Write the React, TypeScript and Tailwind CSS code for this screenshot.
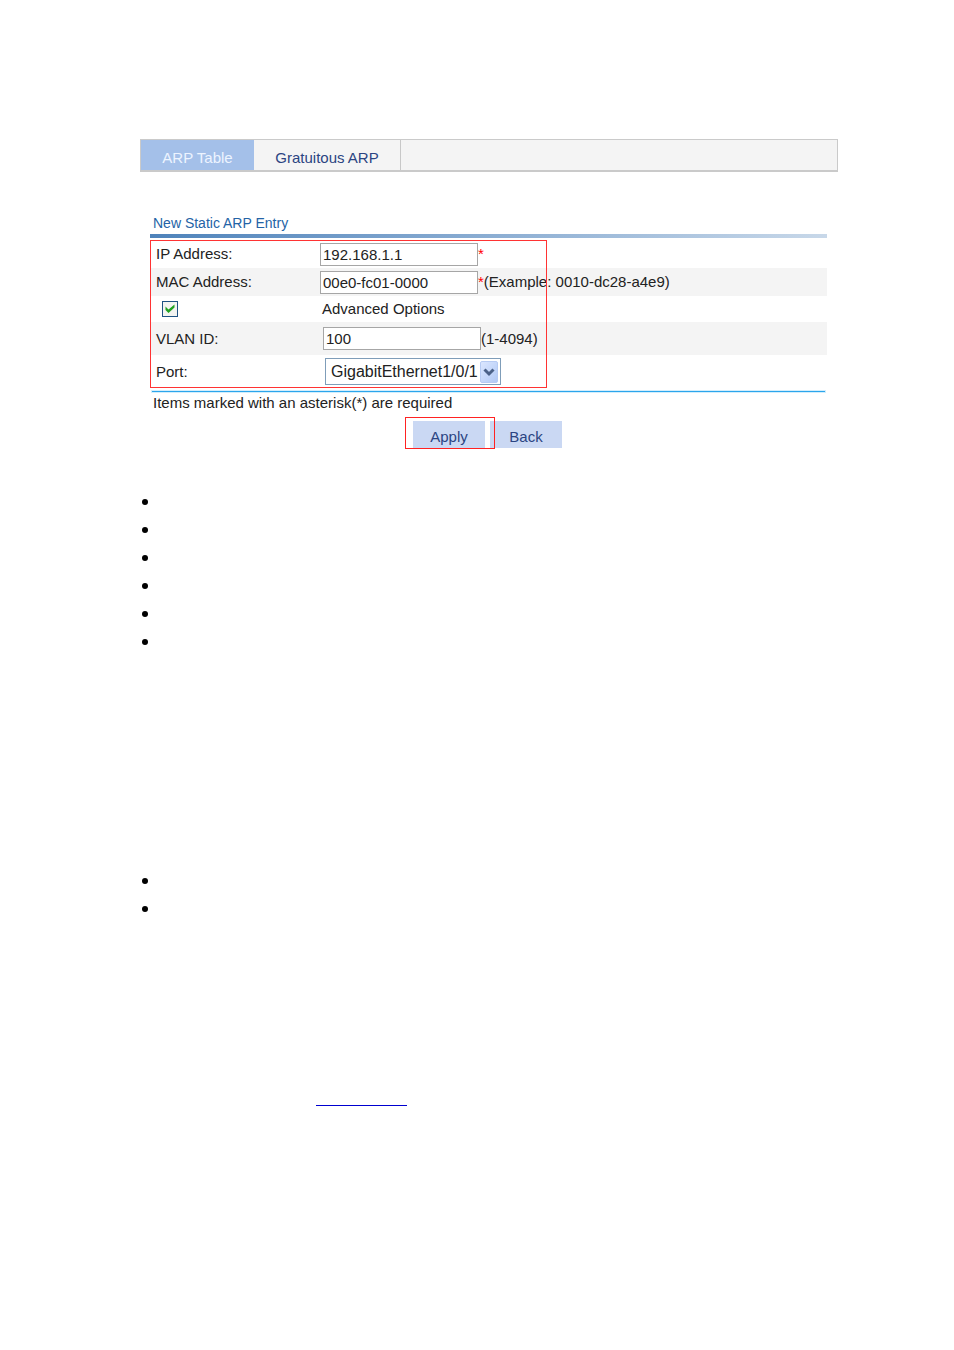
import { useState } from "react";
import type { ReactNode } from "react";

const tabs = ["ARP Table", "Gratuitous ARP"];

const inputClass =
  "h-[23px] w-[158px] border border-[#a6a6a6] bg-white pl-0.5 text-[15px] leading-5 text-[#222] outline-none";

function Row({ label, className, children }: { label: ReactNode; className: string; children: ReactNode }) {
  return (
    <div className={`grid grid-cols-[170px_1fr] items-center ${className}`}>
      <div className="pl-1.5">{label}</div>
      <div className="flex items-center">{children}</div>
    </div>
  );
}

function Bullets({ count }: { count: number }) {
  return (
    <ul>
      {Array.from({ length: count }, (_, i) => (
        <li key={i} className="flex h-7 items-center pl-0.5">
          <span className="h-1.5 w-1.5 rounded-full bg-black" />
        </li>
      ))}
    </ul>
  );
}

export default function App() {
  const [active, setActive] = useState(tabs[0]);
  const [ip, setIp] = useState("192.168.1.1");
  const [mac, setMac] = useState("00e0-fc01-0000");
  const [advanced, setAdvanced] = useState(true);
  const [vlan, setVlan] = useState("100");

  return (
    <main className="bg-white pt-[139px] pr-[116px] pb-60 pl-[140px] font-['Liberation_Sans',Arial,sans-serif] text-[15px] leading-5 text-[#222]">
      {/* Tabs */}
      <nav className="flex h-[33px] border border-b-2 border-[#cacaca] bg-[#f4f4f4]">
        {tabs.map((tab) => (
          <button
            key={tab}
            type="button"
            onClick={() => setActive(tab)}
            className={
              tab === active
                ? "w-[113px] bg-[#a4c0e9] pt-1.5 text-[#edf4ff]"
                : "w-[147px] border-r border-[#c8c8c8] pt-1.5 text-[#2b4482]"
            }
          >
            {tab}
          </button>
        ))}
      </nav>

      <form className="mr-[11px] ml-2.5" onSubmit={(e) => e.preventDefault()}>
        <h1 className="mt-[41px] pb-px pl-[3px] text-sm leading-5 text-[#2463a6]">New Static ARP Entry</h1>
        <div className="h-1 bg-linear-to-r from-[#4e83bb] to-[#c8d8e9]" />

        <div className="relative pt-0.5">
          <Row className="h-7" label={<label htmlFor="ip">IP Address:</label>}>
            <input id="ip" className={inputClass} value={ip} onChange={(e) => setIp(e.target.value)} />
            <span className="text-[#f00]">*</span>
          </Row>
          <Row className="h-7 bg-[#f4f4f4]" label={<label htmlFor="mac">MAC Address:</label>}>
            <input id="mac" className={inputClass} value={mac} onChange={(e) => setMac(e.target.value)} />
            <span className="text-[#f00]">*</span>
            <span>(Example: 0010-dc28-a4e9)</span>
          </Row>
          <Row
            className="h-[26px]"
            label={
              <span className="relative ml-1.5 block h-4 w-4">
                <input
                  id="advanced"
                  type="checkbox"
                  checked={advanced}
                  onChange={(e) => setAdvanced(e.target.checked)}
                  className="block h-4 w-4 appearance-none border border-[#1f5383] bg-[#f3f4f1]"
                />
                {advanced && (
                  <svg viewBox="0 0 16 16" className="pointer-events-none absolute inset-0 h-4 w-4">
                    <path d="M3.500 5.500v3.500L6.500 12l6-5.500V3.500L6.500 8.500z" fill="#22a222" />
                  </svg>
                )}
              </span>
            }
          >
            <label htmlFor="advanced" className="pl-0.5">Advanced Options</label>
          </Row>
          <Row className="h-[33px] bg-[#f4f4f4]" label={<label htmlFor="vlan">VLAN ID:</label>}>
            <input
              id="vlan"
              className={`ml-[3px] ${inputClass}`}
              value={vlan}
              onChange={(e) => setVlan(e.target.value)}
            />
            <span>(1-4094)</span>
          </Row>
          <Row className="h-[33px]" label={<label htmlFor="port">Port:</label>}>
            <span className="relative ml-[5px] block">
              <select
                id="port"
                className="block h-[27px] w-[176px] appearance-none border border-[#7f9db9] bg-white pl-[5px] text-base leading-5 text-[#222] outline-none"
              >
                <option>GigabitEthernet1/0/1</option>
              </select>
              <svg viewBox="0 0 18 22" className="pointer-events-none absolute top-[3px] right-[3px] h-[22px] w-[18px]">
                <defs>
                  <linearGradient id="arrow" x1="0" x2="1" y1="0" y2="1">
                    <stop offset="0" stopColor="#dce7ff" />
                    <stop offset="1" stopColor="#b0c8f5" />
                  </linearGradient>
                </defs>
                <rect x="0.5" y="0.5" width="17" height="21" rx="1.5" fill="url(#arrow)" stroke="#b7cbf3" />
                <path d="M4.500 8.500 9 13l4.500-4.500" fill="none" stroke="#4b6188" strokeWidth="3" />
              </svg>
            </span>
          </Row>
          {/* Highlight around the fields to fill in */}
          <div className="pointer-events-none absolute top-0.5 left-0 h-[148px] w-[397px] border border-[#f33]" />
        </div>

        <div className="mx-0.5 mt-[3px] h-px bg-[#2ba5ec] shadow-[0_0_0_1px_#d3eefc]" />
        <p className="pt-px pl-[3px]">Items marked with an asterisk(*) are required</p>

        <div className="mt-2 flex justify-center gap-[5px] pr-0.5">
          <div className="relative">
            <button type="submit" className="h-[27px] w-[72px] bg-[#cad8f3] pt-1 text-[#2b4482]">Apply</button>
            <div className="pointer-events-none absolute -top-1 -left-2 h-8 w-[90px] border border-[#f22]" />
          </div>
          <button type="button" className="h-[27px] w-[72px] bg-[#cad8f3] pt-1 text-[#2b4482]">Back</button>
        </div>
      </form>

      <div className="mt-10">
        <Bullets count={6} />
      </div>
      <div className="mt-[211px]">
        <Bullets count={2} />
      </div>

      <div className="mt-40 pl-44">
        <a href="#arp" aria-label="ARP" className="block h-[23px] w-[91px] border-b border-[#0000d0]" />
      </div>
    </main>
  );
}
